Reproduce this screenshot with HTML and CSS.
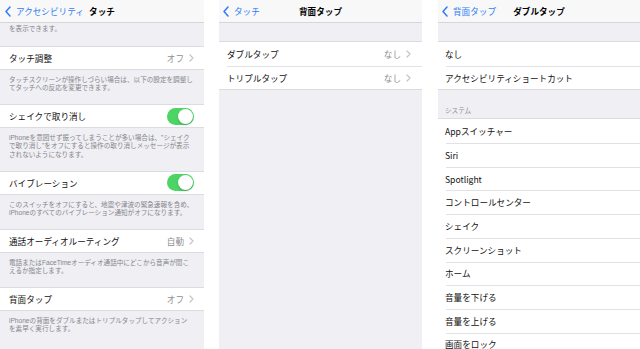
FILE: index.html
```html
<!DOCTYPE html>
<html lang="ja">
<head>
<meta charset="utf-8">
<title>背面タップ</title>
<link rel="stylesheet" href="styles.css">
</head>
<body>
<div class="shots">
  <section class="phone phone-1">
    <header class="nav">
      <span class="back"><svg class="chev-back" viewBox="0 0 6 11"><polyline points="5,1 1,5.5 5,10"/></svg>アクセシビリティ</span>
      <span class="title">タッチ</span>
      <span></span>
    </header>
    <div class="footer footer-top"><span class="ln">を表示できます。</span></div>
    <div class="group">
      <div class="row"><span class="label">タッチ調整</span><span class="value">オフ</span><svg class="chev" viewBox="0 0 5 8"><polyline points="1,1 4,4 1,7"/></svg></div>
    </div>
    <div class="footer"><span class="ln">タッチスクリーンが操作しづらい場合は、以下の設定を調整し</span><span class="ln">てタッチへの反応を変更できます。</span></div>
    <div class="group">
      <div class="row"><span class="label">シェイクで取り消し</span><span class="switch"><span class="knob"></span></span></div>
    </div>
    <div class="footer footer-3"><span class="ln">iPhoneを意図せず振ってしまうことが多い場合は、"シェイク</span><span class="ln">で取り消し"をオフにすると操作の取り消しメッセージが表示</span><span class="ln">されないようになります。</span></div>
    <div class="group">
      <div class="row"><span class="label">バイブレーション</span><span class="switch"><span class="knob"></span></span></div>
    </div>
    <div class="footer"><span class="ln">このスイッチをオフにすると、地震や津波の緊急速報を含め、</span><span class="ln">iPhoneのすべてのバイブレーション通知がオフになります。</span></div>
    <div class="group">
      <div class="row"><span class="label">通話オーディオルーティング</span><span class="value">自動</span><svg class="chev" viewBox="0 0 5 8"><polyline points="1,1 4,4 1,7"/></svg></div>
    </div>
    <div class="footer"><span class="ln">電話またはFaceTimeオーディオ通話中にどこから音声が聞こ</span><span class="ln">えるか指定します。</span></div>
    <div class="group">
      <div class="row"><span class="label">背面タップ</span><span class="value">オフ</span><svg class="chev" viewBox="0 0 5 8"><polyline points="1,1 4,4 1,7"/></svg></div>
    </div>
    <div class="footer"><span class="ln">iPhoneの背面をダブルまたはトリプルタップしてアクション</span><span class="ln">を素早く実行します。</span></div>
  </section>

  <section class="phone phone-2">
    <header class="nav">
      <span class="back"><svg class="chev-back" viewBox="0 0 6 11"><polyline points="5,1 1,5.5 5,10"/></svg>タッチ</span>
      <span class="title">背面タップ</span>
      <span></span>
    </header>
    <div class="spacer"></div>
    <div class="group inset">
      <div class="row"><span class="label">ダブルタップ</span><span class="value">なし</span><svg class="chev" viewBox="0 0 5 8"><polyline points="1,1 4,4 1,7"/></svg></div>
      <div class="row"><span class="label">トリプルタップ</span><span class="value">なし</span><svg class="chev" viewBox="0 0 5 8"><polyline points="1,1 4,4 1,7"/></svg></div>
    </div>
  </section>

  <section class="phone phone-3">
    <header class="nav">
      <span class="back"><svg class="chev-back" viewBox="0 0 6 11"><polyline points="5,1 1,5.5 5,10"/></svg>背面タップ</span>
      <span class="title">ダブルタップ</span>
      <span></span>
    </header>
    <div class="spacer"></div>
    <div class="group inset">
      <div class="row"><span class="label">なし</span></div>
      <div class="row"><span class="label">アクセシビリティショートカット</span></div>
    </div>
    <p class="section-head">システム</p>
    <div class="group inset">
      <div class="row"><span class="label">Appスイッチャー</span></div>
      <div class="row"><span class="label">Siri</span></div>
      <div class="row"><span class="label">Spotlight</span></div>
      <div class="row"><span class="label">コントロールセンター</span></div>
      <div class="row"><span class="label">シェイク</span></div>
      <div class="row"><span class="label">スクリーンショット</span></div>
      <div class="row"><span class="label">ホーム</span></div>
      <div class="row"><span class="label">音量を下げる</span></div>
      <div class="row"><span class="label">音量を上げる</span></div>
      <div class="row"><span class="label">画面をロック</span></div>
    </div>
  </section>
</div>
</body>
</html>
```

FILE: styles.css
```css
html, body {
  margin: 0;
  padding: 0;
  background: #ffffff;
}

body {
  width: 640px;
  height: 349px;
  overflow: hidden;
  font-family: "Noto Sans CJK JP", "Noto Sans", sans-serif;
  color: #111;
}

.shots {
  display: flex;
  height: 349px;
}

.phone {
  height: 349px;
  overflow: hidden;
  background: #efeff4;
  display: flex;
  flex-direction: column;
  flex: none;
}

.phone-1 { width: 204px; --pad: 9px; --rpad: 10px; }
.phone-2 { width: 203px; margin-left: 15px; --pad: 8px; --rpad: 11px; }
.phone-3 { width: 202px; margin-left: 16px; --pad: 7px; --rpad: 0px; }

.nav {
  height: 23px;
  box-sizing: border-box;
  background: #f8f8f8;
  border-bottom: 1px solid #d6d6da;
  display: grid;
  grid-template-columns: 1fr auto 1fr;
  align-items: center;
  font-size: 8.6px;
  flex: none;
}

.back {
  display: flex;
  align-items: center;
  color: #2f7cf6;
  padding-left: 4px;
  white-space: nowrap;
}

.phone-1 .back { padding-left: 5px; }

.chev-back {
  width: 6px;
  height: 11px;
  margin-right: 5px;
  fill: none;
  stroke: #2f7cf6;
  stroke-width: 1.5;
  stroke-linecap: round;
  stroke-linejoin: round;
}

.title {
  font-weight: 700;
  color: #000;
  white-space: nowrap;
}

.footer {
  box-sizing: border-box;
  height: 34.5px;
  padding: 6px var(--pad) 0;
  font-family: "Liberation Sans", "Noto Sans CJK JP", sans-serif;
  font-size: 6.6px;
  color: #85858a;
  white-space: nowrap;
  flex: none;
}

.footer-3 { height: 43px; }

.footer-top {
  padding-top: 2px;
  height: 23px;
}

.ln {
  display: block;
  height: 8.4px;
  line-height: 8.4px;
}

.group {
  background: #fff;
  border-top: 1px solid #dcdce0;
  border-bottom: 1px solid #dcdce0;
  flex: none;
}

.row {
  height: 23.7px;
  box-sizing: border-box;
  display: flex;
  align-items: center;
  padding: 0 var(--rpad) 0 var(--pad);
  font-size: 8.6px;
  white-space: nowrap;
}

.phone-1 .row { height: 21.7px; }

.inset > .row + .row {
  background-image: linear-gradient(#e2e2e6, #e2e2e6);
  background-size: calc(100% - 8px) 1px;
  background-position: 8px 0;
  background-repeat: no-repeat;
}

.label {
  flex: 1;
  color: #111;
}

.value {
  color: #8e8e93;
  margin-right: 5px;
}

.chev {
  width: 5px;
  height: 8px;
  fill: none;
  stroke: #c4c4c8;
  stroke-width: 1.2;
  stroke-linecap: round;
  stroke-linejoin: round;
}

.switch {
  width: 27px;
  height: 17px;
  box-sizing: border-box;
  border-radius: 9px;
  background: #4cd564;
  display: flex;
  justify-content: flex-end;
  align-items: center;
  padding: 1px;
}

.knob {
  width: 15px;
  height: 15px;
  border-radius: 50%;
  background: #fff;
  box-shadow: 0 1px 2px rgba(0, 0, 0, 0.25);
}

.spacer {
  height: 18px;
  flex: none;
}

.section-head {
  margin: 0;
  height: 28px;
  box-sizing: border-box;
  padding: 16px var(--pad) 0;
  font-size: 6.6px;
  line-height: 8px;
  color: #8e8e93;
  flex: none;
}
```
